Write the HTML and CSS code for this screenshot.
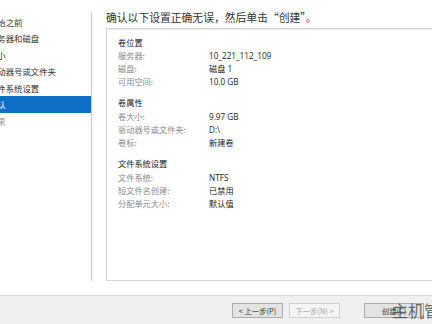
FILE: index.html
```html
<!doctype html>
<html lang="zh-CN">
  <head>
    <meta charset="UTF-8" />
    <title>新建卷向导 - 确认</title>
    <link rel="stylesheet" href="styles.css">
  </head>
  <body>
    <div class="window">
      <div class="main">
        <ul class="steps">
          <li>开始之前</li>
          <li>服务器和磁盘</li>
          <li>大小</li>
          <li>驱动器号或文件夹</li>
          <li>文件系统设置</li>
          <li class="active">确认</li>
          <li class="disabled">结果</li>
        </ul>

        <div class="content">
          <h1>确认以下设置正确无误，然后单击“创建”。</h1>
          <div class="summary">
            <div class="group">
              <h2>卷位置</h2>
              <div class="row"><span class="label">服务器:</span><span class="value">10_221_112_109</span></div>
              <div class="row"><span class="label">磁盘:</span><span class="value">磁盘 1</span></div>
              <div class="row"><span class="label">可用空间:</span><span class="value">10.0 GB</span></div>
            </div>
            <div class="group">
              <h2>卷属性</h2>
              <div class="row"><span class="label">卷大小:</span><span class="value">9.97 GB</span></div>
              <div class="row"><span class="label">驱动器号或文件夹:</span><span class="value">D:\</span></div>
              <div class="row"><span class="label">卷标:</span><span class="value">新建卷</span></div>
            </div>
            <div class="group">
              <h2>文件系统设置</h2>
              <div class="row"><span class="label">文件系统:</span><span class="value">NTFS</span></div>
              <div class="row"><span class="label">短文件名创建:</span><span class="value">已禁用</span></div>
              <div class="row"><span class="label">分配单元大小:</span><span class="value">默认值</span></div>
            </div>
          </div>
        </div>
      </div>

      <div class="footer">
        <button class="btn">&lt; 上一步(P)</button>
        <button class="btn" disabled>下一步(N) &gt;</button>
        <button class="btn btn-create">创建(C)</button>
        <span class="watermark">主机管</span>
      </div>
    </div>
  </body>
</html>
```

FILE: styles.css
```css
* {
  margin: 0;
  padding: 0;
  box-sizing: border-box;
}

body {
  font-family: "Noto Sans CJK SC", "Noto Sans", sans-serif;
  background: #ffffff;
  color: #222;
}

.window {
  width: 432px;
  height: 324px;
  overflow: hidden;
  display: flex;
  flex-direction: column;
}

.main {
  display: flex;
  height: 296px;
  border-bottom: 1px solid #dadada;
  overflow: hidden;
}

.steps {
  list-style: none;
  width: 92px;
  flex-shrink: 0;
  margin: 12px 0 14px 0;
  padding-top: 1.5px;
  border-right: 1px solid #c9c9c9;
  overflow: hidden;
}

.steps li {
  height: 16.5px;
  line-height: 16.5px;
  font-size: 8.4px;
  margin-left: -11px;
  color: #333;
  white-space: nowrap;
}

.steps li.active {
  background: #0f6fc6;
  color: #fff;
  margin-left: 0;
  text-indent: -11px;
}

.steps li.disabled {
  color: #9a9a9a;
}

.content {
  flex: 1;
  padding-left: 14px;
  min-width: 0;
}

.content h1 {
  font-size: 10.8px;
  font-weight: normal;
  color: #333;
  height: 28px;
  line-height: 18px;
  padding-top: 8px;
  white-space: nowrap;
}

.summary {
  width: 420px;
  height: 253px;
  border: 1px solid #d4d4d4;
  box-shadow: inset 0 1px 0 #efefef;
  padding: 6.5px 0 0 11px;
}

.group {
  margin-bottom: 7.7px;
}

.group h2 {
  font-size: 8.2px;
  font-weight: normal;
  color: #222;
  line-height: 13.3px;
}

.row {
  display: flex;
  line-height: 13.3px;
  font-size: 8.2px;
}

.label {
  width: 91px;
  flex-shrink: 0;
  color: #8a8a8a;
}

.value {
  color: #222;
  font-family: "Open Sans", "Noto Sans CJK SC", sans-serif;
}

.footer {
  flex: 1;
  background: #f0f0f0;
  display: flex;
  align-items: flex-start;
  padding: 7px 0 0 232px;
  gap: 6px;
  position: relative;
}

.btn {
  height: 15px;
  width: 51px;
  flex-shrink: 0;
  font-family: "Noto Sans CJK SC", sans-serif;
  font-size: 7.4px;
  line-height: 13px;
  color: #333;
  background: #e3e3e3;
  border: 1px solid #acacac;
}

.btn:disabled {
  color: #a5a5a5;
  background: #f4f4f4;
  border-color: #d0d0d0;
}

.btn-create {
  margin-left: 18px;
  width: 60px;
}

.watermark {
  position: absolute;
  left: 392px;
  top: 4px;
  font-size: 16px;
  line-height: 20px;
  color: rgba(60, 60, 60, 0.75);
  white-space: nowrap;
}
```
